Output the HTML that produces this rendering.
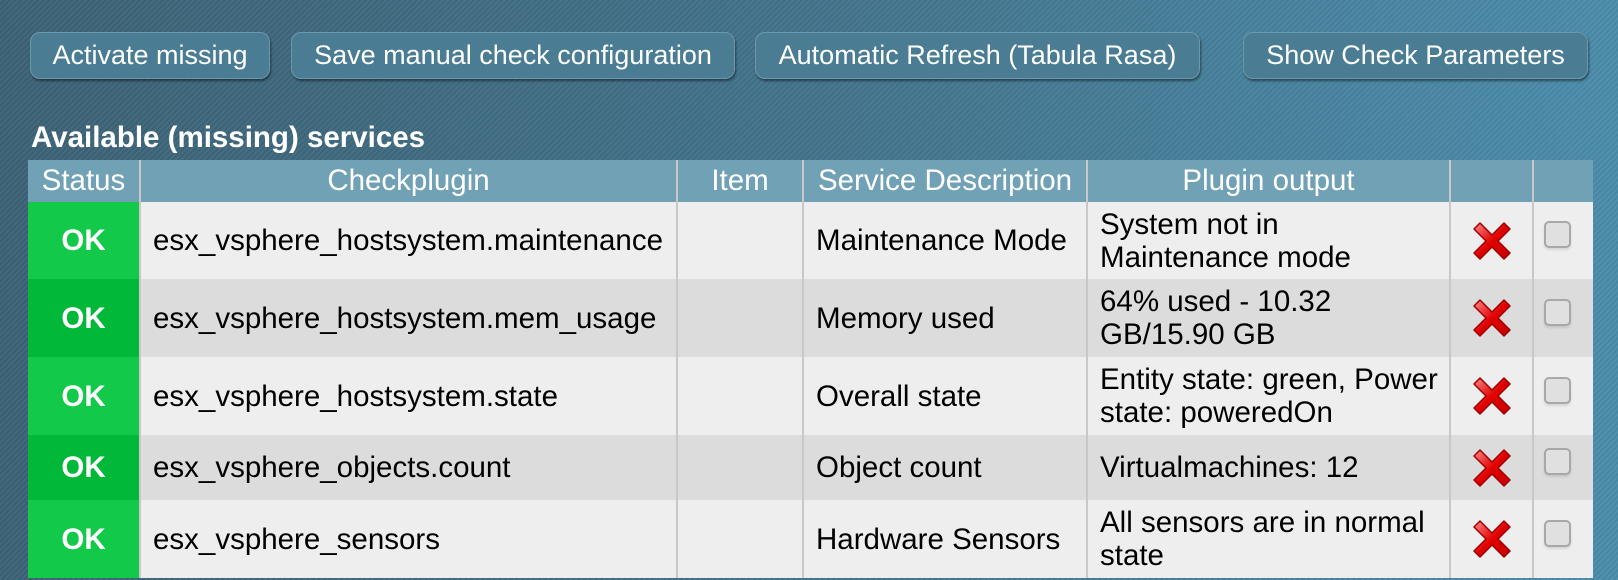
<!DOCTYPE html>
<html><head><style>
html,body{margin:0;padding:0;width:1618px;height:580px;overflow:hidden}
body{background:linear-gradient(90deg,#3c6276 0%,#43738b 50%,#4b8cab 100%);font-family:"Liberation Sans",sans-serif;position:relative}
body:before{content:"";position:absolute;inset:0;background:repeating-linear-gradient(135deg,rgba(255,255,255,0.04) 0 2px,rgba(0,0,0,0.04) 2px 4px)}
.btn{position:absolute;top:32px;height:47px;border-radius:10px;background:#4a7d94;border:1px solid #6b98ad;box-shadow:1px 2px 2px rgba(0,0,0,0.45);color:#fff;font-size:27px;line-height:45px;text-align:center;box-sizing:border-box}
h1{position:absolute;left:31px;top:121px;margin:0;font-size:29.5px;color:#fff;font-weight:bold}
table{position:absolute;left:28px;top:160px;width:1565px;border-collapse:collapse;font-size:29.5px;table-layout:fixed}
th{background:#71a1b4;color:#fff;font-weight:normal;height:42px;border-left:2px solid #c8c8c8;padding:0}
th:first-child{border-left:none}
td{border-left:2px solid #c8c8c8;padding:0 10px 0 12px;color:#000;line-height:33px}
td:first-child{border-left:none}
tr.o td{background:#eeeeee}
tr.e td{background:#dcdcdc}
td.ok{color:#fff;font-weight:bold;text-align:center;padding:0}
tr.o td.ok{background:#13c94a}
tr.e td.ok{background:#02b838}
.cb{width:27px;height:27px;border:2px solid #a8a8a8;border-radius:5px;background:#e0e0e0;box-sizing:border-box;position:relative;top:-6px;box-shadow:0 2px 2px rgba(0,0,0,0.1)}
td.c{text-align:center;padding:0}
td.k{padding:0 0 0 10px}
</style></head><body>
<div class="btn" style="left:30px;width:240px">Activate missing</div>
<div class="btn" style="left:291px;width:444px">Save manual check configuration</div>
<div class="btn" style="left:755px;width:445px">Automatic Refresh (Tabula Rasa)</div>
<div class="btn" style="left:1243px;width:345px">Show Check Parameters</div>
<h1>Available (missing) services</h1>
<table>
<colgroup><col style="width:112px"><col style="width:537px"><col style="width:126px"><col style="width:284px"><col style="width:363px"><col style="width:83px"><col style="width:60px"></colgroup>
<tr><th>Status</th><th>Checkplugin</th><th>Item</th><th>Service Description</th><th>Plugin output</th><th></th><th></th></tr>
<tr class="o" style="height:77px"><td class="ok">OK</td><td>esx_vsphere_hostsystem.maintenance</td><td></td><td>Maintenance Mode</td><td>System not in Maintenance mode</td><td class="c">X</td><td class="k"><div class="cb"></div></td></tr>
<tr class="e" style="height:78px"><td class="ok">OK</td><td>esx_vsphere_hostsystem.mem_usage</td><td></td><td>Memory used</td><td>64% used - 10.32 GB/15.90 GB</td><td class="c">X</td><td class="k"><div class="cb"></div></td></tr>
<tr class="o" style="height:78px"><td class="ok">OK</td><td>esx_vsphere_hostsystem.state</td><td></td><td>Overall state</td><td>Entity state: green, Power state: poweredOn</td><td class="c">X</td><td class="k"><div class="cb"></div></td></tr>
<tr class="e" style="height:65px"><td class="ok">OK</td><td>esx_vsphere_objects.count</td><td></td><td>Object count</td><td>Virtualmachines: 12</td><td class="c">X</td><td class="k"><div class="cb"></div></td></tr>
<tr class="o" style="height:78px"><td class="ok">OK</td><td>esx_vsphere_sensors</td><td></td><td>Hardware Sensors</td><td>All sensors are in normal state</td><td class="c">X</td><td class="k"><div class="cb"></div></td></tr>
</table>
<script>
document.querySelectorAll('td.c').forEach(function(td){if(td.textContent==='X'){td.innerHTML='<svg width="44" height="44" viewBox="0 0 44 44" style="display:block;margin:0 auto"><defs><linearGradient id="g" x1="0" y1="0" x2="1" y2="1"><stop offset="0" stop-color="#ff8a8a"/><stop offset="0.5" stop-color="#e00000"/><stop offset="1" stop-color="#c80000"/></linearGradient></defs><path d="M4 10 L10 4 L22 16 L34 4 L40 10 L28 22 L40 34 L34 40 L22 28 L10 40 L4 34 L16 22 Z" fill="url(#g)" stroke="#a00000" stroke-width="1.5" stroke-linejoin="round"/></svg>';}});
</script>
</body></html>
